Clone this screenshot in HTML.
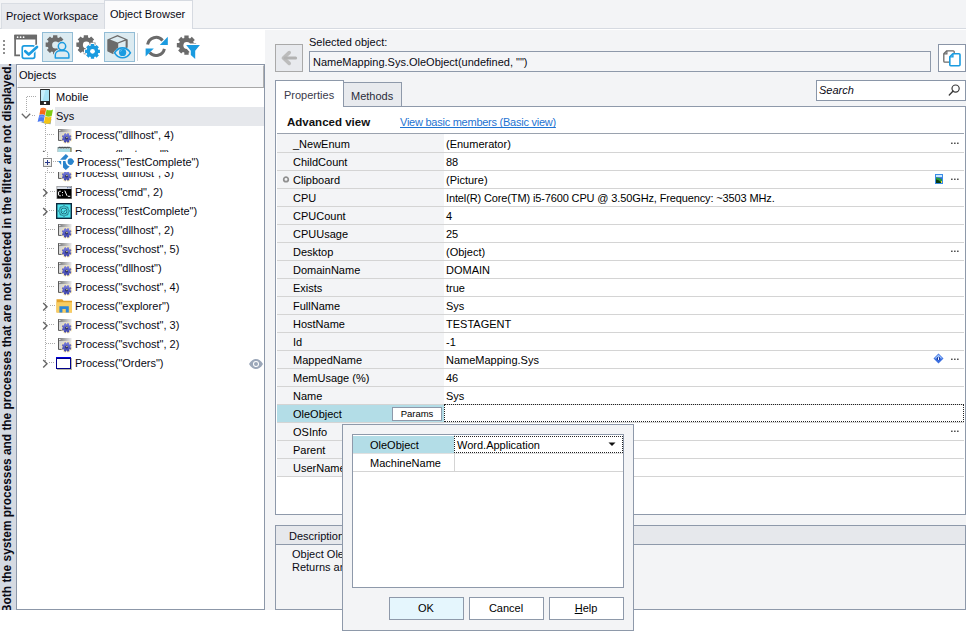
<!DOCTYPE html>
<html><head><meta charset="utf-8">
<style>
*{box-sizing:border-box;margin:0;padding:0}
html,body{width:966px;height:631px;overflow:hidden;background:#fff;font-family:"Liberation Sans",sans-serif;font-size:11px;color:#000}
.a{position:absolute}
.t{position:absolute;white-space:nowrap;line-height:18px}
svg{position:absolute;overflow:visible}
.dh{height:1px;background:repeating-linear-gradient(90deg,#ababab 0 1px,transparent 1px 2px)}
.dv{width:1px;background:repeating-linear-gradient(180deg,#ababab 0 1px,transparent 1px 2px)}
</style></head><body>

<svg width="0" height="0" style="position:absolute">
<defs>
<linearGradient id="gwin" x1="0" y1="0" x2="1" y2="0"><stop offset="0" stop-color="#707070"/><stop offset="1" stop-color="#e8e8e8"/></linearGradient>
<linearGradient id="gbody" x1="0" y1="0" x2="1" y2="1"><stop offset="0" stop-color="#c8c8c8"/><stop offset="1" stop-color="#f4f4f4"/></linearGradient>
<symbol id="i-proc" viewBox="0 0 17 17">
<rect x="2" y="2" width="13.3" height="11.8" fill="url(#gbody)"/>
<rect x="2" y="2" width="13.3" height="3" fill="url(#gwin)"/>
<path d="M2.5 2.5V13.4H6" fill="none" stroke="#5a5a5a" stroke-width="1"/>
<circle cx="3.8" cy="3.5" r="0.7" fill="#fff"/>
<path d="M10.96 6.21 L11.46 5.06 L14.09 6.14 L13.64 7.32 L14.17 7.84 L15.34 7.38 L16.43 10.01 L15.28 10.52 L15.29 11.26 L16.44 11.76 L15.36 14.39 L14.18 13.94 L13.66 14.47 L14.12 15.64 L11.49 16.73 L10.98 15.58 L10.24 15.59 L9.74 16.74 L7.11 15.66 L7.56 14.48 L7.03 13.96 L5.86 14.42 L4.77 11.79 L5.92 11.28 L5.91 10.54 L4.76 10.04 L5.84 7.41 L7.02 7.86 L7.54 7.33 L7.08 6.16 L9.71 5.07 L10.22 6.22Z" fill="#f8e6a0" opacity="0.8"/>
<linearGradient id="ggear" x1="0" y1="0" x2="0" y2="1"><stop offset="0" stop-color="#7a80e0"/><stop offset="1" stop-color="#3a40a8"/></linearGradient>
<path d="M10.95 7.22 L11.45 6.07 L13.39 6.87 L12.94 8.03 L13.45 8.55 L14.61 8.09 L15.42 10.03 L14.28 10.53 L14.28 11.25 L15.43 11.75 L14.63 13.69 L13.47 13.24 L12.95 13.75 L13.41 14.91 L11.47 15.72 L10.97 14.58 L10.25 14.58 L9.75 15.73 L7.81 14.93 L8.26 13.77 L7.75 13.25 L6.59 13.71 L5.78 11.77 L6.92 11.27 L6.92 10.55 L5.77 10.05 L6.57 8.11 L7.73 8.56 L8.25 8.05 L7.79 6.89 L9.73 6.08 L10.23 7.22Z" fill="url(#ggear)"/>
<circle cx="10.6" cy="10.9" r="1.5" fill="#2a2e60"/>
<circle cx="10.9" cy="10.6" r="0.75" fill="#d8d090"/>
</symbol>
<symbol id="i-note" viewBox="0 0 17 17">
<rect x="2" y="1.5" width="13" height="14" fill="#f2f8fa" stroke="#6a8a90" stroke-width="0.8"/>
<rect x="2.4" y="2.6" width="12.2" height="3.5" fill="#a8dce4"/>
<path d="M2.6 2.4l0.8-1.6 0.8 1.6 0.8-1.6 0.8 1.6 0.8-1.6 0.8 1.6 0.8-1.6 0.8 1.6 0.8-1.6 0.8 1.6 0.8-1.6 0.8 1.6 0.8-1.6 0.8 1.6" fill="none" stroke="#3a3a3a" stroke-width="0.7"/>
<rect x="14.4" y="2" width="1" height="6" fill="#8a7a40"/>
</symbol>
<symbol id="i-cmd" viewBox="0 0 17 17">
<rect x="0.5" y="2" width="15.5" height="13" fill="#8a8a8a"/>
<rect x="1.2" y="2.6" width="14.1" height="2.4" fill="#d8dde6"/>
<rect x="11" y="3.2" width="1" height="1" fill="#5a6fa0"/><rect x="12.6" y="3.2" width="1" height="1" fill="#5a6fa0"/><rect x="14.1" y="3.2" width="1" height="1" fill="#5a6fa0"/>
<rect x="1.2" y="5" width="14.1" height="9.4" fill="#000"/>
<g fill="none" stroke="#fff" stroke-width="1">
<path d="M4.8 7.2H3.4L2.6 8V11L3.4 11.8H4.8"/>
<path d="M8.8 6.6L11 11.8"/>
<path d="M11.8 12.3H14.3"/>
</g>
<rect x="6" y="8" width="1" height="1" fill="#fff"/><rect x="6" y="10.6" width="1" height="1" fill="#fff"/>
</symbol>
<symbol id="i-tc" viewBox="0 0 17 17">
<rect x="0.7" y="0.7" width="14.6" height="14.6" fill="#50e4ee" stroke="#0d2a3e" stroke-width="1.4"/>
<g fill="none" stroke="#1a5a6a" stroke-width="0.85">
<path d="M8 2.6L9.7 3.9L11.8 4.2L12.1 6.3L13.4 8L12.1 9.7L11.8 11.8L9.7 12.1L8 13.4L6.3 12.1L4.2 11.8L3.9 9.7L2.6 8L3.9 6.3L4.2 4.2L6.3 3.9Z"/>
<circle cx="8" cy="8" r="3"/>
<path d="M6.6 8.3L7.7 9.4L9.6 6.9"/>
</g>
</symbol>
<symbol id="i-folder" viewBox="0 0 17 17">
<path d="M0.5 1.2H6.2L7.6 2.8H16V14.4H0.5Z" fill="#e3a12a"/>
<rect x="0.5" y="4.2" width="15.5" height="10.2" fill="#f8cd62"/>
<path d="M3.4 14.4V8.2H12.8V14.4H9.8V11.1H6.4V14.4Z" fill="#2d86d6"/>
</symbol>
<symbol id="i-orders" viewBox="0 0 17 17">
<g shape-rendering="crispEdges">
<rect x="1" y="3" width="15" height="12" fill="#b8b8a8"/>
<rect x="0" y="2" width="15" height="12" fill="#00008a"/>
<rect x="1" y="4" width="13" height="9" fill="#fff"/>
<rect x="0" y="2" width="15" height="1" fill="#0000e0"/>
</g>
</symbol>
<symbol id="i-tcl" viewBox="0 0 17 17">
<g fill="#2a84cc">
<path d="M2 5.7L7.8 0L10.4 2.2L7.6 5.7Z"/>
<path d="M0 7H3.2V10.9Z"/>
<path d="M5 7H7.5C7.7 9 8.4 11.4 11.7 12.4L7.8 16L5 13.4Z"/>
<path d="M12.9 4.2C14 4.2 14.8 5 16.2 7.5C14.8 10 14 10.9 12.9 10.9A3.35 3.35 0 0 1 12.9 4.2Z"/>
</g>
</symbol>
</defs></svg>
<!-- TAB STRIP -->
<div class="a" style="left:0;top:0;width:966px;height:29px;background:#f3f4f6"></div>
<div class="a" style="left:0;top:28px;width:966px;height:1px;background:#d6dae1"></div>
<div class="a" style="left:1px;top:3px;width:104px;height:26px;background:#e8eaee;border:1px solid #d9dde3;border-bottom:none"></div>
<div class="t" style="left:6px;top:7px;color:#0a0a14">Project Workspace</div>
<div class="a" style="left:104px;top:0;width:89px;height:29px;background:#fbfbfc;border:1px solid #d6dae1;border-bottom:none"></div>
<div class="t" style="left:110px;top:5px;color:#0a0a14">Object Browser</div>

<!-- LEFT PANEL -->
<div class="a" id="left" style="left:0;top:29px;width:265px;height:581px;background:#fff"></div>
<!-- gripper -->
<svg style="left:0;top:0" width="10" height="60"><g fill="#8f8f8f"><rect x="3" y="40" width="2" height="2"/><rect x="3" y="44" width="2" height="2"/><rect x="3" y="48" width="2" height="2"/><rect x="3" y="52" width="2" height="2"/></g></svg>
<!-- pressed buttons -->
<div class="a" style="left:42px;top:32px;width:31px;height:30px;background:#dcebf1;border:1px solid #93bdd6"></div>
<div class="a" style="left:104px;top:32px;width:31px;height:30px;background:#dcebf1;border:1px solid #93bdd6"></div>
<div class="a" style="left:137px;top:33px;width:1px;height:28px;background:#d5d8dc"></div>
<!-- icon1: window + checkbox -->
<svg style="left:10px;top:30px" width="32" height="32" viewBox="0 0 32 32">
<path d="M10 25.3H5.1V5.5H26.2V15" fill="none" stroke="#6b6b6b" stroke-width="1.7"/>
<rect x="4.3" y="4.8" width="22.7" height="4.6" rx="0.6" fill="#6b6b6b"/>
<circle cx="7.6" cy="7.2" r="0.85" fill="#fff"/><circle cx="10.6" cy="7.2" r="0.85" fill="#fff"/><circle cx="13.6" cy="7.2" r="0.85" fill="#fff"/>
<rect x="12.3" y="15.9" width="12.4" height="12.4" rx="1.8" fill="#fff" stroke="#1a9be0" stroke-width="1.7"/>
<path d="M15.2 21.2L18.8 24.6L27 17" fill="none" stroke="#fff" stroke-width="4.6" stroke-linecap="round" stroke-linejoin="round"/>
<path d="M15.2 21.2L18.8 24.6L27 17" fill="none" stroke="#1a9be0" stroke-width="2.7" stroke-linecap="round" stroke-linejoin="round"/>
</svg>
<!-- icon2: gear + person -->
<svg style="left:42px;top:30px" width="32" height="32" viewBox="0 0 32 32">
<path d="M11.02 7.42 L11.06 5.14 L15.34 5.14 L15.38 7.42 L16.81 8.01 L18.45 6.43 L21.47 9.45 L19.89 11.09 L20.48 12.52 L22.76 12.56 L22.76 16.84 L20.48 16.88 L19.89 18.31 L21.47 19.95 L18.45 22.97 L16.81 21.39 L15.38 21.98 L15.34 24.26 L11.06 24.26 L11.02 21.98 L9.59 21.39 L7.95 22.97 L4.93 19.95 L6.51 18.31 L5.92 16.88 L3.64 16.84 L3.64 12.56 L5.92 12.52 L6.51 11.09 L4.93 9.45 L7.95 6.43 L9.59 8.01Z" fill="#6b6b6b"/>
<circle cx="13.6" cy="14.9" r="3.5" fill="#dcebf1"/>
<circle cx="20" cy="16.3" r="5.2" fill="#dcebf1"/>
<path d="M11.6 29.4v-4.4c0-3.2 2.8-5.8 6.2-5.8h4.4c3.4 0 6.2 2.6 6.2 5.8v4.4z" fill="#dcebf1"/>
<circle cx="20" cy="16.3" r="3.7" fill="#dcebf1" stroke="#1a9be0" stroke-width="1.5"/>
<path d="M13.3 28v-2.9c0-2.5 2.2-4.4 4.8-4.4h4c2.6 0 4.8 1.9 4.8 4.4V28z" fill="#dcebf1" stroke="#1a9be0" stroke-width="1.5" stroke-linejoin="round"/>
</svg>
<!-- icon3: gears -->
<svg style="left:74px;top:30px" width="32" height="32" viewBox="0 0 32 32">
<path d="M9.72 7.42 L9.76 5.14 L14.04 5.14 L14.08 7.42 L15.51 8.01 L17.15 6.43 L20.17 9.45 L18.59 11.09 L19.18 12.52 L21.46 12.56 L21.46 16.84 L19.18 16.88 L18.59 18.31 L20.17 19.95 L17.15 22.97 L15.51 21.39 L14.08 21.98 L14.04 24.26 L9.76 24.26 L9.72 21.98 L8.29 21.39 L6.65 22.97 L3.63 19.95 L5.21 18.31 L4.62 16.88 L2.34 16.84 L2.34 12.56 L4.62 12.52 L5.21 11.09 L3.63 9.45 L6.65 6.43 L8.29 8.01Z" fill="#6b6b6b"/>
<circle cx="12.3" cy="15" r="3.4" fill="#fff"/>
<path d="M16.33 14.44 L16.38 12.76 L20.62 12.76 L20.67 14.44 L21.82 14.91 L23.04 13.76 L26.04 16.76 L24.89 17.98 L25.36 19.13 L27.04 19.18 L27.04 23.42 L25.36 23.47 L24.89 24.62 L26.04 25.84 L23.04 28.84 L21.82 27.69 L20.67 28.16 L20.62 29.84 L16.38 29.84 L16.33 28.16 L15.18 27.69 L13.96 28.84 L10.96 25.84 L12.11 24.62 L11.64 23.47 L9.96 23.42 L9.96 19.18 L11.64 19.13 L12.11 17.98 L10.96 16.76 L13.96 13.76 L15.18 14.91Z" fill="#fff"/>
<path d="M16.83 15.54 L16.84 13.88 L20.16 13.88 L20.17 15.54 L21.39 16.04 L22.57 14.88 L24.92 17.23 L23.76 18.41 L24.26 19.63 L25.92 19.64 L25.92 22.96 L24.26 22.97 L23.76 24.19 L24.92 25.37 L22.57 27.72 L21.39 26.56 L20.17 27.06 L20.16 28.72 L16.84 28.72 L16.83 27.06 L15.61 26.56 L14.43 27.72 L12.08 25.37 L13.24 24.19 L12.74 22.97 L11.08 22.96 L11.08 19.64 L12.74 19.63 L13.24 18.41 L12.08 17.23 L14.43 14.88 L15.61 16.04Z" fill="#1a9be0"/>
<circle cx="18.5" cy="21.3" r="2.4" fill="#fff"/>
</svg>
<!-- icon4: cube + eye -->
<svg style="left:104px;top:30px" width="32" height="32" viewBox="0 0 32 32">
<path d="M3.3 9.4L13.5 5L23.7 9.4V17.6L12 22.6L8.8 24L3.3 21.2Z" fill="#6b6b6b"/>
<path d="M6 9.5L13.5 6.6L21 9.5L13.6 12.4Z" fill="#dcebf1"/>
<path d="M14.2 13.6L21.6 10.8V17.6L14.2 20.6Z" fill="#dcebf1"/>
<path d="M9.2 22.8c2.3-3.8 5.6-5.9 9.3-5.9s7 2.1 9.3 5.9c-2.3 3.8-5.6 5.9-9.3 5.9s-7-2.1-9.3-5.9z" fill="#dcebf1"/>
<path d="M10.6 22.8c2-3.2 4.8-4.9 7.9-4.9s5.9 1.7 7.9 4.9c-2 3.2-4.8 4.9-7.9 4.9s-5.9-1.7-7.9-4.9z" fill="#dcebf1" stroke="#1a9be0" stroke-width="1.6"/>
<circle cx="18.6" cy="22.4" r="3.6" fill="#1a9be0"/>
<path d="M16.6 21.6a2.4 2.4 0 0 1 1.6-1.9" fill="none" stroke="#8fd0f4" stroke-width="0.7"/>
</svg>
<!-- icon5: refresh -->
<svg style="left:140px;top:30px" width="32" height="32" viewBox="0 0 32 32">
<path d="M7.6 14.6A8.6 8.6 0 0 1 22.6 10.4" fill="none" stroke="#6b6b6b" stroke-width="3"/>
<path d="M24.4 18.8A8.6 8.6 0 0 1 9.6 22.6" fill="none" stroke="#6b6b6b" stroke-width="3"/>
<path d="M27.8 6.8V15H19.8Z" fill="#1a9be0"/>
<path d="M5.6 26.6V18.6H13.8Z" fill="#1a9be0"/>
</svg>
<!-- icon6: gear + filter -->
<svg style="left:172px;top:30px" width="32" height="32" viewBox="0 0 32 32">
<path d="M12.32 7.92 L12.34 5.54 L16.66 5.54 L16.68 7.92 L18.11 8.51 L19.80 6.84 L22.86 9.90 L21.19 11.59 L21.78 13.02 L24.16 13.04 L24.16 17.36 L21.78 17.38 L21.19 18.81 L22.86 20.50 L19.80 23.56 L18.11 21.89 L16.68 22.48 L16.66 24.86 L12.34 24.86 L12.32 22.48 L10.89 21.89 L9.20 23.56 L6.14 20.50 L7.81 18.81 L7.22 17.38 L4.84 17.36 L4.84 13.04 L7.22 13.02 L7.81 11.59 L6.14 9.90 L9.20 6.84 L10.89 8.51Z" fill="#6b6b6b"/>
<circle cx="14.8" cy="15.4" r="3.4" fill="#fff"/>
<path d="M12.6 13.6H29.4V16.6L24.4 22.6V30.4L17.8 25.4V22.2L12.6 16.4Z" fill="#fff"/>
<path d="M14.2 15H27.9L23.2 20.8V29L18.8 25V20.8Z" fill="#1a9be0"/>
</svg>
<!-- vertical strip -->
<div class="a" style="left:0;top:64px;width:16px;height:546px;background:#d5dae2;overflow:hidden">
 <div class="a" style="left:1px;top:549px;transform-origin:0 0;transform:rotate(-90deg);white-space:nowrap;font-weight:bold;font-size:11.9px;line-height:13px;color:#0a0a14;width:560px">Both the system processes and the processes that are not selected in the filter are not displayed.</div>
</div>
<!-- tree box -->
<div class="a" style="left:16px;top:64px;width:249px;height:546px;border:1px solid #8c97a8;background:#fff"></div>
<div class="a" style="left:17px;top:65px;width:247px;height:23px;background:#f3f4f6;border-top:1px solid #fdfdfe;border-left:1px solid #fdfdfe;border-bottom:1px solid #a8a8a8;border-right:1px solid #b0b0b0"></div>
<div class="t" style="left:19px;top:66px;line-height:19px;color:#0a0a14">Objects</div>

<!-- tree static -->
<div class="a dh" style="left:27px;top:96px;width:10px"></div>
<div class="a dv" style="left:26px;top:97px;height:16px"></div>
<svg style="left:21px;top:113px" width="10" height="6"><path d="M0.8 0.8L5 5L9.2 0.8" fill="none" stroke="#6a6a6a" stroke-width="1.3"/></svg>
<div class="a dh" style="left:32px;top:115px;width:4px"></div>
<svg style="left:38px;top:88px" width="14" height="18" viewBox="0 0 14 18">
<rect x="2" y="1" width="10" height="16" rx="0.6" fill="#262626"/>
<path d="M2.9 2H11.1V13H2.9Z" fill="#a8e4f6"/>
<path d="M2.9 2H7.5L4.5 13H2.9Z" fill="#c8f0fc"/>
<rect x="5.9" y="14" width="2.2" height="2" fill="#fff"/>
</svg>
<div class="t" style="left:56px;top:88px;line-height:19px;color:#0a0a14">Mobile</div>
<div class="a" style="left:55px;top:107px;width:209px;height:19px;background:#e6e8ec"></div>
<svg style="left:36px;top:107px" width="18" height="18" viewBox="0 0 18 18">
<path d="M3 16.2C5 15.4 7 15.6 8.6 16.6L14.6 17.2L15.4 12Z" fill="#1a3a20" opacity="0.45"/>
<path d="M4.6 1.6C6.4 0.4 8.4 0.6 10.2 1.7L8.9 8.1C7.2 7 5.3 6.8 3.4 7.8Z" fill="#f56a16"/>
<path d="M10.6 2.4C12.5 3.6 14.8 3.7 17 2.5L15.7 9C13.5 10.1 11.3 10 9.3 8.8Z" fill="#7fcc14"/>
<path d="M3.2 8.3C5.1 7.3 7.1 7.4 8.8 8.6L7.5 15.2C5.7 14 3.7 13.9 1.6 14.9Z" fill="#4a78f0"/>
<path d="M9.2 9.2C11.2 10.4 13.4 10.5 15.6 9.4L14.3 16C12.1 17.1 9.9 17 7.9 15.8Z" fill="#f4c414"/>
<path d="M5 2C6.5 1.1 8 1.2 9.4 2L9 3.8C7.6 3 6.2 3 4.6 3.8Z" fill="#fb9a5a" opacity="0.6"/>
<path d="M3.5 9C5 8.2 6.5 8.3 8 9.1L7.6 10.9C6.2 10.1 4.8 10.1 3.1 10.9Z" fill="#8aa8ff" opacity="0.6"/>
</svg>
<div class="t" style="left:56px;top:107px;line-height:19px;color:#0a0a14">Sys</div>
<div class="a dv" style="left:45px;top:124px;height:239px"></div>
<svg style="left:248px;top:358px" width="16" height="12" viewBox="0 0 16 12">
<path d="M1 6C3 2.6 5.4 1 8 1s5 1.6 7 5c-2 3.4-4.4 5-7 5S3 9.4 1 6Z" fill="#9ba7b9"/>
<circle cx="8" cy="6" r="3" fill="#fff"/><circle cx="8" cy="6" r="2" fill="#9ba7b9"/>
</svg>
<div class="a dh" style="left:47px;top:134px;width:8px"></div>
<svg style="left:56px;top:127px" width="17" height="17"><use href="#i-proc"/></svg>
<div class="t" style="left:75px;top:126px;line-height:19px;color:#0a0a14">Process(&quot;dllhost&quot;, 4)</div>
<svg style="left:42px;top:150px" width="7" height="10"><path d="M1.2 1L5 4.8L1.2 8.6" fill="none" stroke="#666" stroke-width="1.4"/></svg>
<div class="a dh" style="left:50px;top:153px;width:5px"></div>
<svg style="left:56px;top:146px" width="17" height="17"><use href="#i-note"/></svg>
<div class="t" style="left:75px;top:145px;line-height:19px;color:#0a0a14">Process(&quot;notepad&quot;)</div>
<div class="a dh" style="left:47px;top:172px;width:8px"></div>
<svg style="left:56px;top:165px" width="17" height="17"><use href="#i-proc"/></svg>
<div class="t" style="left:75px;top:164px;line-height:19px;color:#0a0a14">Process(&quot;dllhost&quot;, 3)</div>
<svg style="left:42px;top:188px" width="7" height="10"><path d="M1.2 1L5 4.8L1.2 8.6" fill="none" stroke="#666" stroke-width="1.4"/></svg>
<div class="a dh" style="left:50px;top:191px;width:5px"></div>
<svg style="left:56px;top:184px" width="17" height="17"><use href="#i-cmd"/></svg>
<div class="t" style="left:75px;top:183px;line-height:19px;color:#0a0a14">Process(&quot;cmd&quot;, 2)</div>
<svg style="left:42px;top:207px" width="7" height="10"><path d="M1.2 1L5 4.8L1.2 8.6" fill="none" stroke="#666" stroke-width="1.4"/></svg>
<div class="a dh" style="left:49px;top:210px;width:6px"></div>
<svg style="left:56px;top:203px" width="17" height="17"><use href="#i-tc"/></svg>
<div class="t" style="left:75px;top:202px;line-height:19px;color:#0a0a14">Process(&quot;TestComplete&quot;)</div>
<div class="a dh" style="left:46px;top:229px;width:9px"></div>
<svg style="left:56px;top:222px" width="17" height="17"><use href="#i-proc"/></svg>
<div class="t" style="left:75px;top:221px;line-height:19px;color:#0a0a14">Process(&quot;dllhost&quot;, 2)</div>
<div class="a dh" style="left:47px;top:248px;width:8px"></div>
<svg style="left:56px;top:241px" width="17" height="17"><use href="#i-proc"/></svg>
<div class="t" style="left:75px;top:240px;line-height:19px;color:#0a0a14">Process(&quot;svchost&quot;, 5)</div>
<div class="a dh" style="left:46px;top:267px;width:9px"></div>
<svg style="left:56px;top:260px" width="17" height="17"><use href="#i-proc"/></svg>
<div class="t" style="left:75px;top:259px;line-height:19px;color:#0a0a14">Process(&quot;dllhost&quot;)</div>
<div class="a dh" style="left:47px;top:286px;width:8px"></div>
<svg style="left:56px;top:279px" width="17" height="17"><use href="#i-proc"/></svg>
<div class="t" style="left:75px;top:278px;line-height:19px;color:#0a0a14">Process(&quot;svchost&quot;, 4)</div>
<svg style="left:42px;top:302px" width="7" height="10"><path d="M1.2 1L5 4.8L1.2 8.6" fill="none" stroke="#666" stroke-width="1.4"/></svg>
<div class="a dh" style="left:50px;top:305px;width:5px"></div>
<svg style="left:56px;top:298px" width="17" height="17"><use href="#i-folder"/></svg>
<div class="t" style="left:75px;top:297px;line-height:19px;color:#0a0a14">Process(&quot;explorer&quot;)</div>
<svg style="left:42px;top:321px" width="7" height="10"><path d="M1.2 1L5 4.8L1.2 8.6" fill="none" stroke="#666" stroke-width="1.4"/></svg>
<div class="a dh" style="left:49px;top:324px;width:6px"></div>
<svg style="left:56px;top:317px" width="17" height="17"><use href="#i-proc"/></svg>
<div class="t" style="left:75px;top:316px;line-height:19px;color:#0a0a14">Process(&quot;svchost&quot;, 3)</div>
<div class="a dh" style="left:46px;top:343px;width:9px"></div>
<svg style="left:56px;top:336px" width="17" height="17"><use href="#i-proc"/></svg>
<div class="t" style="left:75px;top:335px;line-height:19px;color:#0a0a14">Process(&quot;svchost&quot;, 2)</div>
<svg style="left:42px;top:359px" width="7" height="10"><path d="M1.2 1L5 4.8L1.2 8.6" fill="none" stroke="#666" stroke-width="1.4"/></svg>
<div class="a dh" style="left:49px;top:362px;width:6px"></div>
<svg style="left:56px;top:355px" width="17" height="17"><use href="#i-orders"/></svg>
<div class="t" style="left:75px;top:354px;line-height:19px;color:#0a0a14">Process(&quot;Orders&quot;)</div>
<!-- drag ghost -->
<div class="a" style="left:38px;top:152px;width:170px;height:20px;background:#fff"></div>
<div class="a dv" style="left:47px;top:152px;height:6px"></div>
<div class="a dv" style="left:47px;top:168px;height:5px"></div>
<div class="a" style="left:43px;top:158px;width:9px;height:9px;border:1px solid #8a8a8a;background:linear-gradient(#fff,#e8e8e8)"></div>
<div class="a" style="left:45px;top:162px;width:5px;height:1px;background:#2a3a8a"></div>
<div class="a" style="left:47px;top:160px;width:1px;height:5px;background:#2a3a8a"></div>
<div class="a dh" style="left:53px;top:161px;width:5px"></div>
<svg style="left:58px;top:154px" width="17" height="17"><use href="#i-tcl"/></svg>
<div class="t" style="left:77px;top:153px;line-height:19px;color:#0a0a14">Process(&quot;TestComplete&quot;)</div>
<!-- RIGHT PANEL -->
<div class="a" style="left:265px;top:30px;width:701px;height:580px;background:#f3f4f6"></div>
<!-- back button -->
<div class="a" style="left:275px;top:44px;width:28px;height:28px;background:#e8eaee;border:1px solid #a9a9a9"></div>
<svg style="left:275px;top:44px" width="28" height="28" viewBox="0 0 28 28">
<path d="M14.2 8.6L8.4 14L14.2 19.4" fill="none" stroke="#bcbcbc" stroke-width="3.6" stroke-linecap="round" stroke-linejoin="round"/>
<path d="M10 14H20.6" fill="none" stroke="#b2b2b2" stroke-width="3" stroke-linecap="round"/>
</svg>
<div class="t" style="left:309px;top:33px;color:#0a0a14">Selected object:</div>
<div class="a" style="left:309px;top:51px;width:622px;height:21px;border:1px solid #8e99aa;background:#f4f5f7"></div>
<div class="t" style="left:313px;top:53px;color:#0a0a14">NameMapping.Sys.OleObject(undefined, &quot;&quot;)</div>
<!-- copy button -->
<div class="a" style="left:938px;top:44px;width:28px;height:28px;border:1px solid #8a95a7;background:#fff"></div>
<svg style="left:938px;top:44px" width="28" height="28" viewBox="0 0 28 28">
<path d="M8.8 6.8H15.2A1 1 0 0 1 16.2 7.8V17.2A1 1 0 0 1 15.2 18.2H6.8A1 1 0 0 1 5.8 17.2V9.8Z" fill="#fff" stroke="#6b6b6b" stroke-width="1.3" stroke-linejoin="round"/>
<path d="M5.9 9.9H8.9V6.9" fill="none" stroke="#6b6b6b" stroke-width="1.2"/>
<path d="M14.8 9.8H21A1 1 0 0 1 22 10.8V20.8A1 1 0 0 1 21 21.8H12.8A1 1 0 0 1 11.8 20.8V12.8Z" fill="#fff" stroke="#1a9be0" stroke-width="1.6" stroke-linejoin="round"/>
<path d="M11.9 12.9H14.9V9.9" fill="none" stroke="#1a9be0" stroke-width="1.4"/>
</svg>
<!-- tabs -->
<div class="a" style="left:344px;top:82px;width:58px;height:25px;background:#e8eaee;border:1px solid #8e99aa;border-bottom:none;border-left:none"></div>
<div class="t" style="left:351px;top:87px;color:#2a2a3a">Methods</div>
<div class="a" style="left:275px;top:106px;width:691px;height:409px;background:#fff;border:1px solid #8e99aa"></div>
<div class="a" style="left:275px;top:80px;width:69px;height:27px;background:#fff;border:1px solid #8e99aa;border-bottom:none"></div>
<div class="t" style="left:284px;top:86px;color:#3a3a4a">Properties</div>
<!-- search -->
<div class="a" style="left:816px;top:80px;width:150px;height:21px;border:1px solid #8a96a8;background:#fff"></div>
<div class="t" style="left:819px;top:81px;font-style:italic;color:#0a0a14">Search</div>
<svg style="left:944px;top:80px" width="20" height="20" viewBox="0 0 20 20">
<circle cx="11.6" cy="8.6" r="3.6" fill="none" stroke="#3a3a3a" stroke-width="1.2"/>
<path d="M9.1 11.1L5.3 14.9" stroke="#3a3a3a" stroke-width="1.4" stroke-linecap="round"/>
</svg>
<!-- header -->
<div class="t" style="left:287px;top:113px;font-weight:bold;font-size:11.5px;color:#111">Advanced view</div>
<div class="t" style="left:400px;top:113px;color:#1e73d2;text-decoration:underline;text-decoration-skip-ink:none;letter-spacing:-0.25px">View basic members (Basic view)</div>
<div class="a" style="left:277px;top:133px;width:687px;height:1px;background:#9aa2ae"></div>
<!-- description -->
<div class="a" style="left:275px;top:525px;width:691px;height:85px;background:#f3f4f6;border:1px solid #8e99aa"></div>
<div class="a" style="left:276px;top:526px;width:689px;height:19px;background:#e6e8ec;border-bottom:1px solid #8e99aa"></div>
<div class="t" style="left:289px;top:527px;color:#0a0a14">Description</div>
<div class="t" style="left:292px;top:548px;line-height:13px;color:#0a0a14">Object OleObject(ProgID, MachineName)</div>
<div class="t" style="left:292px;top:561px;line-height:13px;color:#0a0a14">Returns an OLE object.</div>
<!-- GRID -->
<div class="a" style="left:277px;top:134px;width:167px;height:18px;background:#f3f4f6"></div>
<div class="a" style="left:277px;top:152px;width:167px;height:18px;background:#f3f4f6"></div>
<div class="a" style="left:277px;top:170px;width:167px;height:18px;background:#f3f4f6"></div>
<div class="a" style="left:277px;top:188px;width:167px;height:18px;background:#f3f4f6"></div>
<div class="a" style="left:277px;top:206px;width:167px;height:18px;background:#f3f4f6"></div>
<div class="a" style="left:277px;top:224px;width:167px;height:18px;background:#f3f4f6"></div>
<div class="a" style="left:277px;top:242px;width:167px;height:18px;background:#f3f4f6"></div>
<div class="a" style="left:277px;top:260px;width:167px;height:18px;background:#f3f4f6"></div>
<div class="a" style="left:277px;top:278px;width:167px;height:18px;background:#f3f4f6"></div>
<div class="a" style="left:277px;top:296px;width:167px;height:18px;background:#f3f4f6"></div>
<div class="a" style="left:277px;top:314px;width:167px;height:18px;background:#f3f4f6"></div>
<div class="a" style="left:277px;top:332px;width:167px;height:18px;background:#f3f4f6"></div>
<div class="a" style="left:277px;top:350px;width:167px;height:18px;background:#f3f4f6"></div>
<div class="a" style="left:277px;top:368px;width:167px;height:18px;background:#f3f4f6"></div>
<div class="a" style="left:277px;top:386px;width:167px;height:18px;background:#f3f4f6"></div>
<div class="a" style="left:277px;top:404px;width:167px;height:18px;background:#b3dde7"></div>
<div class="a" style="left:277px;top:422px;width:167px;height:18px;background:#f3f4f6"></div>
<div class="a" style="left:277px;top:440px;width:167px;height:18px;background:#f3f4f6"></div>
<div class="a" style="left:277px;top:458px;width:167px;height:18px;background:#f3f4f6"></div>
<div class="a" style="left:277px;top:152px;width:687px;height:1px;background:#d4d4d4"></div>
<div class="a" style="left:277px;top:170px;width:687px;height:1px;background:#d4d4d4"></div>
<div class="a" style="left:277px;top:188px;width:687px;height:1px;background:#d4d4d4"></div>
<div class="a" style="left:277px;top:206px;width:687px;height:1px;background:#d4d4d4"></div>
<div class="a" style="left:277px;top:224px;width:687px;height:1px;background:#d4d4d4"></div>
<div class="a" style="left:277px;top:242px;width:687px;height:1px;background:#d4d4d4"></div>
<div class="a" style="left:277px;top:260px;width:687px;height:1px;background:#d4d4d4"></div>
<div class="a" style="left:277px;top:278px;width:687px;height:1px;background:#d4d4d4"></div>
<div class="a" style="left:277px;top:296px;width:687px;height:1px;background:#d4d4d4"></div>
<div class="a" style="left:277px;top:314px;width:687px;height:1px;background:#d4d4d4"></div>
<div class="a" style="left:277px;top:332px;width:687px;height:1px;background:#d4d4d4"></div>
<div class="a" style="left:277px;top:350px;width:687px;height:1px;background:#d4d4d4"></div>
<div class="a" style="left:277px;top:368px;width:687px;height:1px;background:#d4d4d4"></div>
<div class="a" style="left:277px;top:386px;width:687px;height:1px;background:#d4d4d4"></div>
<div class="a" style="left:277px;top:404px;width:687px;height:1px;background:#d4d4d4"></div>
<div class="a" style="left:277px;top:422px;width:687px;height:1px;background:#d4d4d4"></div>
<div class="a" style="left:277px;top:440px;width:687px;height:1px;background:#d4d4d4"></div>
<div class="a" style="left:277px;top:458px;width:687px;height:1px;background:#d4d4d4"></div>
<div class="a" style="left:277px;top:476px;width:687px;height:1px;background:#d4d4d4"></div>
<div class="t" style="left:293px;top:135px;color:#000">_NewEnum</div>
<div class="t" style="left:446px;top:135px;color:#000">(Enumerator)</div>
<svg style="left:950px;top:142px" width="10" height="3"><rect x="1.2" y="0.6" width="1.3" height="1.3" fill="#111"/><rect x="4.2" y="0.6" width="1.3" height="1.3" fill="#111"/><rect x="7.2" y="0.6" width="1.3" height="1.3" fill="#111"/></svg>
<div class="t" style="left:293px;top:153px;color:#000">ChildCount</div>
<div class="t" style="left:446px;top:153px;color:#000">88</div>
<div class="t" style="left:293px;top:171px;color:#000">Clipboard</div>
<div class="t" style="left:446px;top:171px;color:#000">(Picture)</div>
<svg style="left:950px;top:178px" width="10" height="3"><rect x="1.2" y="0.6" width="1.3" height="1.3" fill="#111"/><rect x="4.2" y="0.6" width="1.3" height="1.3" fill="#111"/><rect x="7.2" y="0.6" width="1.3" height="1.3" fill="#111"/></svg>
<svg style="left:935px;top:174px" width="8" height="10" viewBox="0 0 8 10"><rect x="0" y="0" width="8" height="10" fill="#3a8ce8"/><rect x="1" y="1" width="6" height="8" fill="#2a6ad8"/><rect x="1" y="1" width="6" height="2.2" fill="#c8e8ff"/><path d="M1 3.5Q4 3 7 5.5V9H1Z" fill="#2a9a3a"/><path d="M1 5.5Q3 5.2 6 8.2V9H1Z" fill="#0a3a10"/><rect x="6" y="7" width="1" height="2" fill="#e8e040"/></svg>
<div class="t" style="left:293px;top:189px;color:#000">CPU</div>
<div class="t" style="left:446px;top:189px;color:#000;letter-spacing:-0.13px">Intel(R) Core(TM) i5-7600 CPU @ 3.50GHz, Frequency: ~3503 MHz.</div>
<div class="t" style="left:293px;top:207px;color:#000">CPUCount</div>
<div class="t" style="left:446px;top:207px;color:#000">4</div>
<div class="t" style="left:293px;top:225px;color:#000">CPUUsage</div>
<div class="t" style="left:446px;top:225px;color:#000">25</div>
<div class="t" style="left:293px;top:243px;color:#000">Desktop</div>
<div class="t" style="left:446px;top:243px;color:#000">(Object)</div>
<svg style="left:950px;top:250px" width="10" height="3"><rect x="1.2" y="0.6" width="1.3" height="1.3" fill="#111"/><rect x="4.2" y="0.6" width="1.3" height="1.3" fill="#111"/><rect x="7.2" y="0.6" width="1.3" height="1.3" fill="#111"/></svg>
<div class="t" style="left:293px;top:261px;color:#000">DomainName</div>
<div class="t" style="left:446px;top:261px;color:#000">DOMAIN</div>
<div class="t" style="left:293px;top:279px;color:#000">Exists</div>
<div class="t" style="left:446px;top:279px;color:#000">true</div>
<div class="t" style="left:293px;top:297px;color:#000">FullName</div>
<div class="t" style="left:446px;top:297px;color:#000">Sys</div>
<div class="t" style="left:293px;top:315px;color:#000">HostName</div>
<div class="t" style="left:446px;top:315px;color:#000">TESTAGENT</div>
<div class="t" style="left:293px;top:333px;color:#000">Id</div>
<div class="t" style="left:446px;top:333px;color:#000">-1</div>
<div class="t" style="left:293px;top:351px;color:#000">MappedName</div>
<div class="t" style="left:446px;top:351px;color:#000">NameMapping.Sys</div>
<svg style="left:950px;top:358px" width="10" height="3"><rect x="1.2" y="0.6" width="1.3" height="1.3" fill="#111"/><rect x="4.2" y="0.6" width="1.3" height="1.3" fill="#111"/><rect x="7.2" y="0.6" width="1.3" height="1.3" fill="#111"/></svg>
<svg style="left:933px;top:353px" width="11" height="11" viewBox="0 0 11 11"><path d="M5.5 0.5L10.5 5.5L5.5 10.5L0.5 5.5Z" fill="#3a6ee0"/><path d="M5.5 1.5L9.5 5.5L5.5 5.5L1.5 5.5Z" fill="#9cc4ff"/><circle cx="5.5" cy="5.5" r="1.8" fill="#1a3aa0"/><rect x="5" y="4.3" width="1" height="2.6" fill="#fff"/></svg>
<div class="t" style="left:293px;top:369px;color:#000">MemUsage (%)</div>
<div class="t" style="left:446px;top:369px;color:#000">46</div>
<div class="t" style="left:293px;top:387px;color:#000">Name</div>
<div class="t" style="left:446px;top:387px;color:#000">Sys</div>
<div class="t" style="left:293px;top:405px;color:#000">OleObject</div>
<div class="t" style="left:293px;top:423px;color:#000">OSInfo</div>
<svg style="left:950px;top:430px" width="10" height="3"><rect x="1.2" y="0.6" width="1.3" height="1.3" fill="#111"/><rect x="4.2" y="0.6" width="1.3" height="1.3" fill="#111"/><rect x="7.2" y="0.6" width="1.3" height="1.3" fill="#111"/></svg>
<div class="t" style="left:293px;top:441px;color:#000">Parent</div>
<div class="t" style="left:293px;top:459px;color:#000">UserName</div>
<svg style="left:282px;top:175px" width="8" height="8"><circle cx="4" cy="4.4" r="2.3" fill="none" stroke="#909090" stroke-width="1.7"/></svg>
<div class="a" style="left:392px;top:407px;width:50px;height:14px;background:#fff;border:1px solid #8e99aa"></div>
<div class="t" style="left:392px;top:407px;width:50px;text-align:center;font-size:9.5px;line-height:14px;color:#000">Params</div>
<div class="a" style="left:444px;top:404px;width:520px;height:18px;border:1px dotted #222"></div>
<!-- DIALOG -->
<div class="a" style="left:342px;top:424px;width:292px;height:207px;background:#f3f4f6;border:1px solid #8e99aa"></div>
<div class="a" style="left:352px;top:434px;width:272px;height:154px;background:#fff;border:1px solid #8e99aa"></div>
<div class="a" style="left:353px;top:436px;width:101px;height:17px;background:#b3dde7"></div>
<div class="a" style="left:353px;top:471px;width:270px;height:1px;background:#d4d4d4"></div>
<div class="a" style="left:353px;top:453px;width:270px;height:1px;background:#e0e0e0"></div>
<div class="a" style="left:454px;top:435px;width:1px;height:36px;background:#d4d4d4"></div>
<div class="t" style="left:370px;top:436px;color:#000">OleObject</div>
<div class="t" style="left:370px;top:454px;color:#000">MachineName</div>
<div class="a" style="left:454px;top:436px;width:169px;height:17px;border:1px dotted #222;background:#fff"></div>
<div class="t" style="left:457px;top:436px;color:#000">Word.Application</div>
<svg style="left:607px;top:441px" width="10" height="6"><path d="M1.5 1.5H8.5L5 5Z" fill="#111"/></svg>
<!-- buttons -->
<div class="a" style="left:389px;top:597px;width:75px;height:23px;background:#e5f6fd;border:1px solid #8e99aa"></div>
<div class="t" style="left:389px;top:599px;width:74px;text-align:center;color:#000">OK</div>
<div class="a" style="left:469px;top:597px;width:75px;height:23px;background:#fff;border:1px solid #8e99aa"></div>
<div class="t" style="left:469px;top:599px;width:74px;text-align:center;color:#000">Cancel</div>
<div class="a" style="left:549px;top:597px;width:75px;height:23px;background:#fff;border:1px solid #8e99aa"></div>
<div class="t" style="left:549px;top:599px;width:74px;text-align:center;color:#000"><u>H</u>elp</div>
</body></html>
